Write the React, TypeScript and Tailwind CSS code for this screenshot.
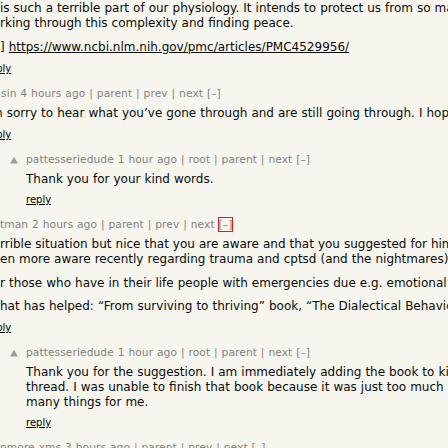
import React from "react";

const Arrow = () => (
  <svg width="10" height="10" viewBox="0 0 10 10" className="mt-[2px] shrink-0">
    <polygon points="5,1.5 8.8,8.5 1.2,8.5" fill="#9a9a9a" />
  </svg>
);

const Head = ({ children, className = "" }: { children: React.ReactNode; className?: string }) => (
  <div className={`text-[10.67px] leading-[13px] text-[#828282] whitespace-nowrap tracking-[0.08px] [word-spacing:0.4px] ${className}`}>
    {children}
  </div>
);

const Reply = ({ label = "reply", className = "" }: { label?: string; className?: string }) => (
  <div className={`text-[10px] leading-[13px] whitespace-nowrap ${className}`}>
    <a className="underline text-black">{label}</a>
  </div>
);

const Nav = ({ root = false, prev = true, boxed = false }: { root?: boolean; prev?: boolean; boxed?: boolean }) => (
  <>
    {root && <> | root</>} | parent{prev && <> | prev</>} | next{" "}
    <span className={boxed ? "outline outline-[#f01414] outline-offset-0" : ""}>[–]</span>
  </>
);

export default function App() {
  return (
    <div className="w-[448px] h-[448px] overflow-hidden bg-[#f6f6ef] text-[#0a0a0a] font-['DejaVu_Sans',sans-serif] [word-spacing:0.2px]">
      {/* top-level comment, scrolled off to the left */}
      <div className="pt-[1px] text-[12px] leading-[15px] whitespace-nowrap">
        <p>is such a terrible part of our physiology. It intends to protect us from so many</p>
        <p>rking through this complexity and finding peace.</p>
        <p className="mt-[9px]">
          ] <a className="underline">https://www.ncbi.nlm.nih.gov/pmc/articles/PMC4529956/</a>
        </p>
      </div>
      <Reply label="eply" className="mt-[7px] -ml-[10px]" />

      <Head className="mt-[12px] ml-[1px]">
        sin 4 hours ago <Nav />
      </Head>
      <div className="mt-[6px] text-[12px] leading-[15px] whitespace-nowrap -ml-[9px]">
        m sorry to hear what you’ve gone through and are still going through. I hope
      </div>
      <Reply label="eply" className="mt-[7px] -ml-[10px]" />

      {/* nested reply */}
      <div className="mt-[12px] flex gap-[7px] pl-[9px]">
        <Arrow />
        <div>
          <Head>
            pattesseriedude 1 hour ago <Nav root prev={false} />
          </Head>
          <div className="mt-[6px] text-[12px] leading-[15px]">Thank you for your kind words.</div>
          <Reply className="mt-[6px]" />
        </div>
      </div>

      <Head className="mt-[12px]">
        tman 2 hours ago <Nav boxed />
      </Head>
      <div className="mt-[6px] text-[12px] leading-[15px] whitespace-nowrap">
        <p>rrible situation but nice that you are aware and that you suggested for him.</p>
        <p>en more aware recently regarding trauma and cptsd (and the nightmares)</p>
        <p className="mt-[9px]">r those who have in their life people with emergencies due e.g. emotional</p>
        <p className="mt-[8px]">hat has helped: “From surviving to thriving” book, “The Dialectical Behavior</p>
      </div>
      <Reply label="eply" className="mt-[7px] -ml-[10px]" />

      <div className="mt-[12px] flex gap-[7px] pl-[9px]">
        <Arrow />
        <div>
          <Head>
            pattesseriedude 1 hour ago <Nav root prev={false} />
          </Head>
          <div className="mt-[6px] text-[12px] leading-[15px] whitespace-nowrap">
            <p>Thank you for the suggestion. I am immediately adding the book to kindle</p>
            <p>thread. I was unable to finish that book because it was just too much</p>
            <p>many things for me.</p>
          </div>
          <Reply className="mt-[6px]" />
        </div>
      </div>

      <Head className="mt-[12px]">
        nmore-xms 3 hours ago <Nav />
      </Head>
    </div>
  );
}
